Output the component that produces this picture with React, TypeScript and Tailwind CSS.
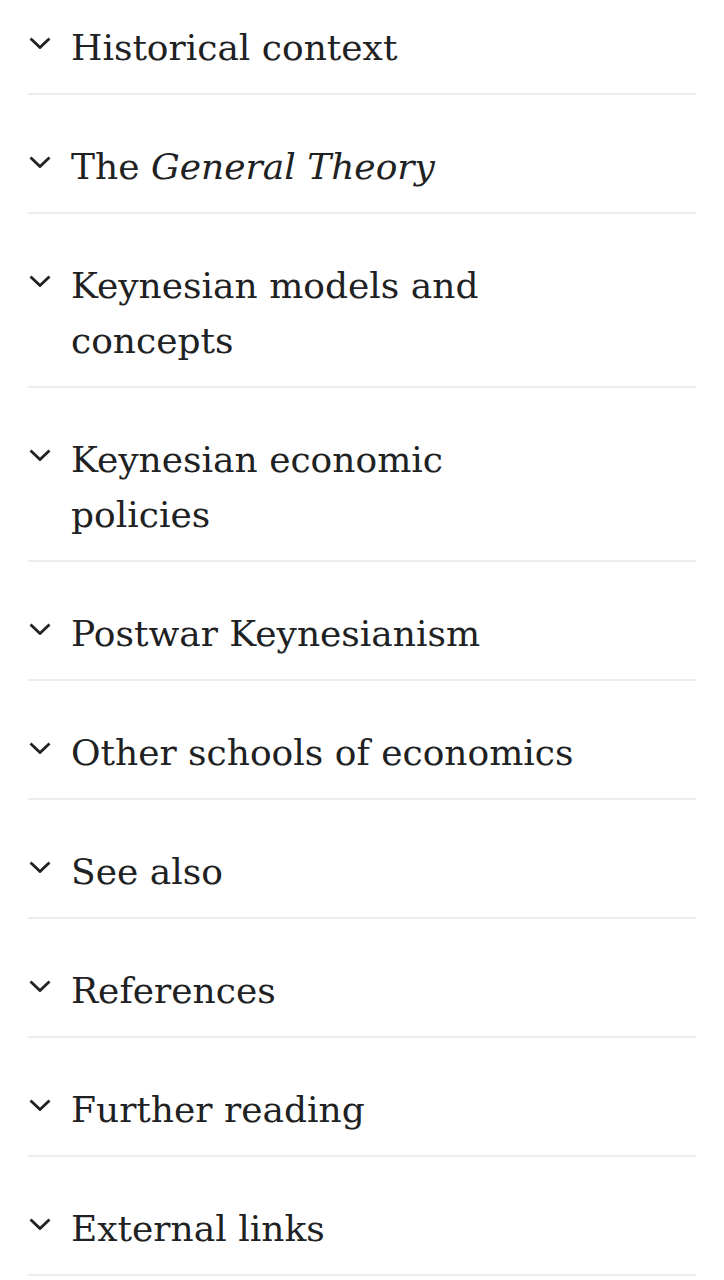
import React from "react";

type Section = {
    id: string;
    title: React.ReactNode;
};

const sections: Section[] = [
    { id: "historical", title: "Historical context" },
    {
        id: "general-theory",
        title: (
            <>
                The <i>General Theory</i>
            </>
        ),
    },
    { id: "models", title: "Keynesian models and concepts" },
    { id: "policies", title: "Keynesian economic policies" },
    { id: "postwar", title: "Postwar Keynesianism" },
    { id: "other", title: "Other schools of economics" },
    { id: "see-also", title: "See also" },
    { id: "references", title: "References" },
    { id: "further", title: "Further reading" },
    { id: "external", title: "External links" },
];

const Chevron: React.FC = () => (
    <svg
        width="22"
        height="12"
        viewBox="0 0 22 12"
        fill="none"
        className="mt-[17px] shrink-0"
    >
        <path
            d="M1.5 1.5 L11 10.5 L20.5 1.5"
            stroke="#202122"
            strokeWidth="2.8"
        />
    </svg>
);

const SectionRow: React.FC<{ section: Section }> = ({ section }) => (
    <div className="flex items-start gap-[20px] border-b-2 border-[#eaecf0] pt-[44px] pb-[18px] pl-[1px]">
        <Chevron />
        <h2 className="max-w-[520px] text-[36px] leading-[55px] font-normal text-[#202122] [font-family:'DejaVu_Serif',Georgia,serif]">
            {section.title}
        </h2>
    </div>
);

export default function App() {
    return (
        <div className="min-h-screen w-full overflow-hidden bg-white">
            <div className="-mt-[24px] mx-[28px] flex flex-col">
                {sections.map(section => (
                    <SectionRow key={section.id} section={section} />
                ))}
            </div>
        </div>
    );
}
